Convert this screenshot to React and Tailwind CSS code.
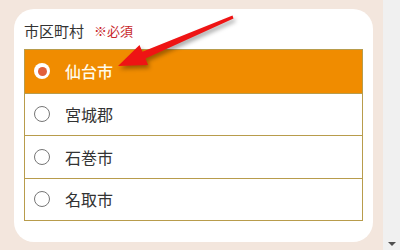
const options = ["仙台市", "宮城郡", "石巻市", "名取市"];

const Radio = ({ checked }) =>
  checked ? (
    <span className="flex h-4 w-4 items-center justify-center rounded-full bg-white">
      <span className="h-[9px] w-[9px] rounded-full bg-[#e2603a]"></span>
    </span>
  ) : (
    <span className="h-4 w-4 rounded-full border border-[#767676] bg-white"></span>
  );

const Arrow = () => (
  <svg
    className="pointer-events-none absolute left-0 top-0 drop-shadow-[2px_3px_2px_rgba(0,0,0,0.35)]"
    width="400"
    height="250"
    viewBox="0 0 400 250"
  >
    <polygon
      points="118,66 148,65 145.5,58.5 233.5,18.5 232.5,15.5 142.4,51.8 139.5,45"
      fill="#ee1414"
    />
  </svg>
);

const App = () => {
  const selected = 0;

  return (
    <div
      className="relative flex h-[250px] w-[400px] overflow-hidden"
      style={{ fontFamily: '"Noto Sans CJK JP", "Noto Sans", sans-serif' }}
    >
      <div className="flex-1 bg-[#f3e6dd] pl-[14px] pr-[10px] pt-[9px]">
        <div className="h-[233px] rounded-[20px] bg-white px-[10px] pt-[12px]">
          {/* label */}
          <div className="flex h-[20px] items-center">
            <span className="text-[15px] text-[#333]">市区町村</span>
            <span className="ml-[10px] text-[13px] text-[#c8262a]">※必須</span>
          </div>

          {/* options */}
          <ul className="mt-[8px] border border-[#b89c4c]">
            {options.map((name, i) => (
              <li
                key={name}
                className={`flex h-[42.5px] items-center gap-[15px] pl-[9px] ${
                  i > 0 ? "border-t border-[#b89c4c]" : ""
                } ${i === selected ? "bg-[#f08c00]" : "bg-white"}`}
              >
                <Radio checked={i === selected} />
                <span
                  className={`text-[16px] ${
                    i === selected
                      ? "font-medium text-[#fffbea]"
                      : "text-[#333]"
                  }`}
                >
                  {name}
                </span>
              </li>
            ))}
          </ul>
        </div>
      </div>

      {/* scrollbar */}
      <div className="flex w-[17px] flex-col justify-end bg-[#f0f0f0] pb-[4px]">
        <div className="mx-auto h-0 w-0 border-l-[4px] border-r-[4px] border-t-[4px] border-l-transparent border-r-transparent border-t-[#505050]"></div>
      </div>

      <Arrow />
    </div>
  );
};

export default App;
